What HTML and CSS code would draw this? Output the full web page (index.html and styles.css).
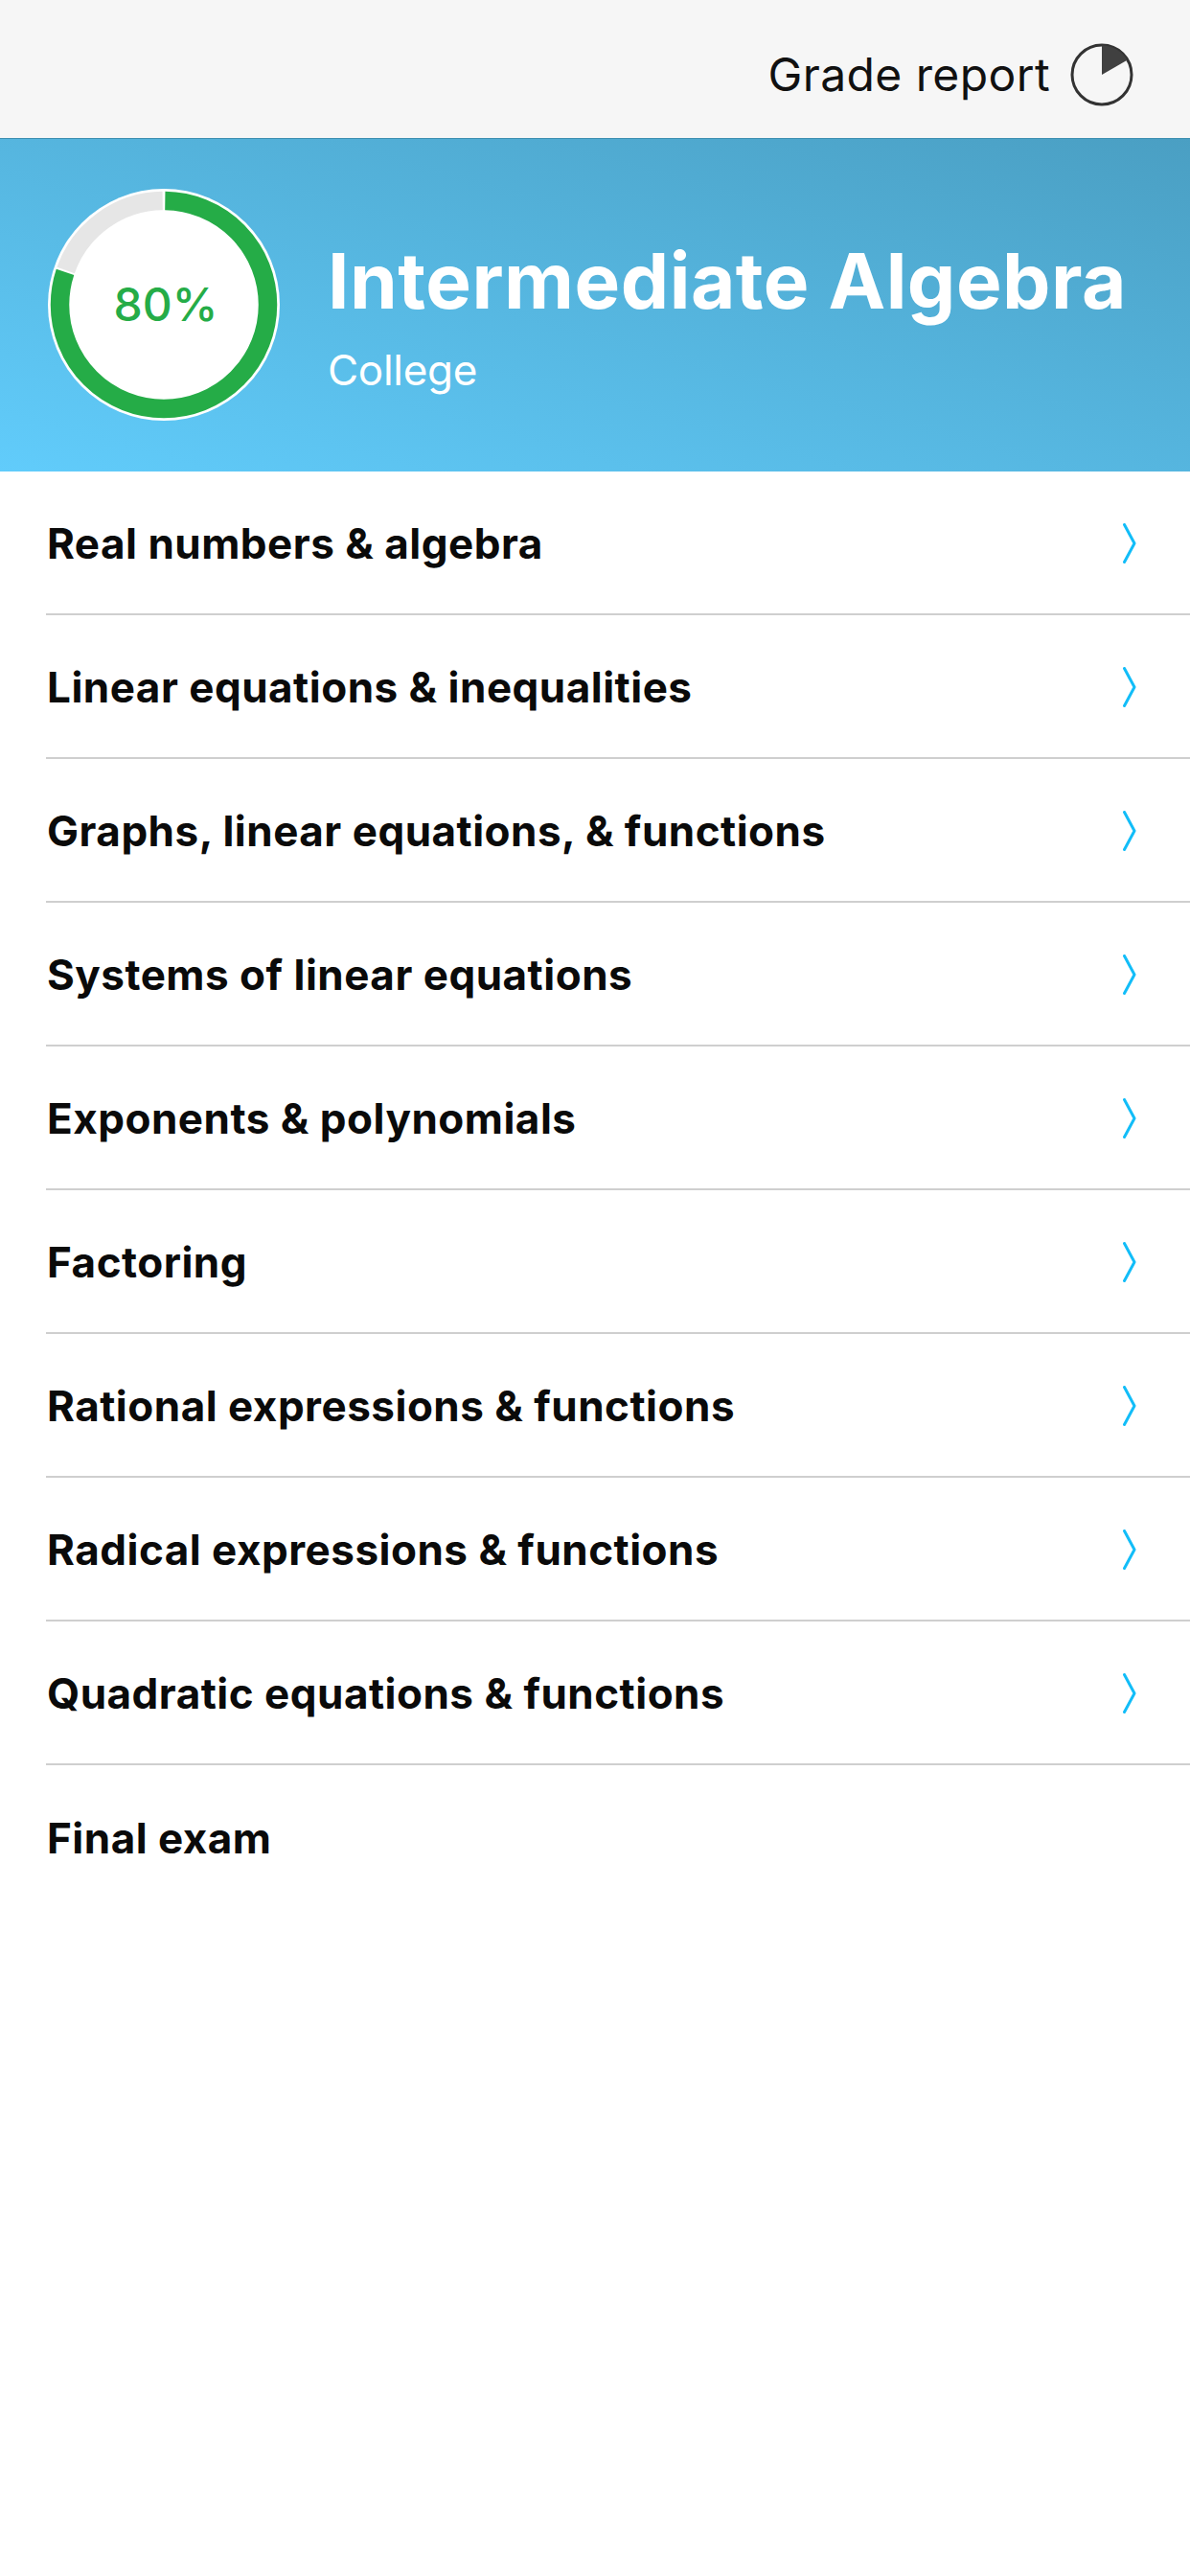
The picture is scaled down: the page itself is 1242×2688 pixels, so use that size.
FILE: index.html
```
<!DOCTYPE html>
<html lang="en">
<head>
<meta charset="utf-8">
<title>Intermediate Algebra</title>
<link rel="stylesheet" href="styles.css">
</head>
<body>
<header class="topbar">
  <span class="report-label">Grade report</span>
  <svg class="report-icon" viewBox="0 0 66 66" aria-hidden="true">
    <circle cx="33" cy="33" r="31" fill="none" stroke="#333" stroke-width="3"/>
    <path d="M33 33 V2.5 A30.5 30.5 0 0 1 59.4 17.8 Z" fill="#404040"/>
  </svg>
</header>
<section class="hero">
  <div class="ring">
    <svg class="ring-art" viewBox="0 0 242 242" aria-hidden="true">
      <circle cx="121" cy="121" r="121" fill="#fff"/>
      <g transform="rotate(-90 121 121)" fill="none" stroke-width="19.5">
        <circle cx="121" cy="121" r="108.5" stroke="#e6e6e6" pathLength="100" stroke-dasharray="19.4 80.6" stroke-dashoffset="-80.4"/>
        <circle cx="121" cy="121" r="108.5" stroke="#25ac47" pathLength="100" stroke-dasharray="79.9 20.1" stroke-dashoffset="-0.2"/>
      </g>
    </svg>
    <span class="ring-value">80%</span>
  </div>
  <div class="hero-text">
    <h1 class="hero-title">Intermediate Algebra</h1>
    <p class="hero-sub">College</p>
  </div>
</section>
<ul class="topics">
  <li class="topic"><span>Real numbers &amp; algebra</span><svg class="chev" viewBox="0 0 14 42"><path d="M1.5 1.5 L12 21 L1.5 40.5"/></svg></li>
  <li class="topic"><span>Linear equations &amp; inequalities</span><svg class="chev" viewBox="0 0 14 42"><path d="M1.5 1.5 L12 21 L1.5 40.5"/></svg></li>
  <li class="topic"><span>Graphs, linear equations, &amp; functions</span><svg class="chev" viewBox="0 0 14 42"><path d="M1.5 1.5 L12 21 L1.5 40.5"/></svg></li>
  <li class="topic"><span>Systems of linear equations</span><svg class="chev" viewBox="0 0 14 42"><path d="M1.5 1.5 L12 21 L1.5 40.5"/></svg></li>
  <li class="topic"><span>Exponents &amp; polynomials</span><svg class="chev" viewBox="0 0 14 42"><path d="M1.5 1.5 L12 21 L1.5 40.5"/></svg></li>
  <li class="topic"><span>Factoring</span><svg class="chev" viewBox="0 0 14 42"><path d="M1.5 1.5 L12 21 L1.5 40.5"/></svg></li>
  <li class="topic"><span>Rational expressions &amp; functions</span><svg class="chev" viewBox="0 0 14 42"><path d="M1.5 1.5 L12 21 L1.5 40.5"/></svg></li>
  <li class="topic"><span>Radical expressions &amp; functions</span><svg class="chev" viewBox="0 0 14 42"><path d="M1.5 1.5 L12 21 L1.5 40.5"/></svg></li>
  <li class="topic"><span>Quadratic equations &amp; functions</span><svg class="chev" viewBox="0 0 14 42"><path d="M1.5 1.5 L12 21 L1.5 40.5"/></svg></li>
  <li class="topic topic-last"><span>Final exam</span></li>
</ul>
</body>
</html>
```
FILE: styles.css
```
* { box-sizing: border-box; }
html, body { margin: 0; padding: 0; background: #fff; }
body { width: 1242px; height: 2688px; overflow: hidden; font-family: Inter, "Liberation Sans", sans-serif; color: #0a0a0a; }

.topbar {
  height: 145px;
  background: #f6f6f6;
  border-bottom: 1px solid #3d8fb0;
  display: flex;
  align-items: center;
  justify-content: flex-end;
  padding: 11px 59px 0 0;
  gap: 21px;
}
.report-label { font-size: 48px; line-height: 60px; letter-spacing: 0.4px; color: #111; }
.report-icon { width: 66px; height: 66px; display: block; }

.hero {
  height: 347px;
  background: linear-gradient(to top right, #61ccfb 0%, #4a9fc3 100%);
  display: flex;
  align-items: center;
  padding: 0 0 2px 50px;
  gap: 50px;
}
.ring { width: 242px; height: 242px; display: grid; place-items: center; flex: none; }
.ring-art { grid-area: 1 / 1; width: 242px; height: 242px; display: block; }
.ring-value { grid-area: 1 / 1; padding-left: 4px; font-size: 48px; font-weight: 450; color: #25ac47; line-height: 1; }

.hero-text { display: flex; flex-direction: column; color: #fff; padding-top: 22px; }
.hero-title { margin: 0; font-size: 80px; line-height: 96px; font-weight: 700; letter-spacing: 0.5px; }
.hero-sub { margin: 19px 0 0; font-size: 44px; line-height: 52px; font-weight: 400; letter-spacing: -0.3px; }

.topics { list-style: none; margin: 0; padding: 0 0 0 48px; }
.topic {
  height: 150px;
  border-bottom: 2px solid #cfcfcf;
  display: flex;
  align-items: center;
  justify-content: space-between;
  padding: 2px 56px 0 1px;
  font-size: 44px;
  font-weight: 650;
  line-height: 52px;
  letter-spacing: 0.5px;
  color: #0a0a0a;
}
.topic-last { border-bottom: none; }
.chev { width: 14px; height: 42px; display: block; fill: none; stroke: #12bdf8; stroke-width: 3; stroke-linecap: round; stroke-linejoin: round; }
```
